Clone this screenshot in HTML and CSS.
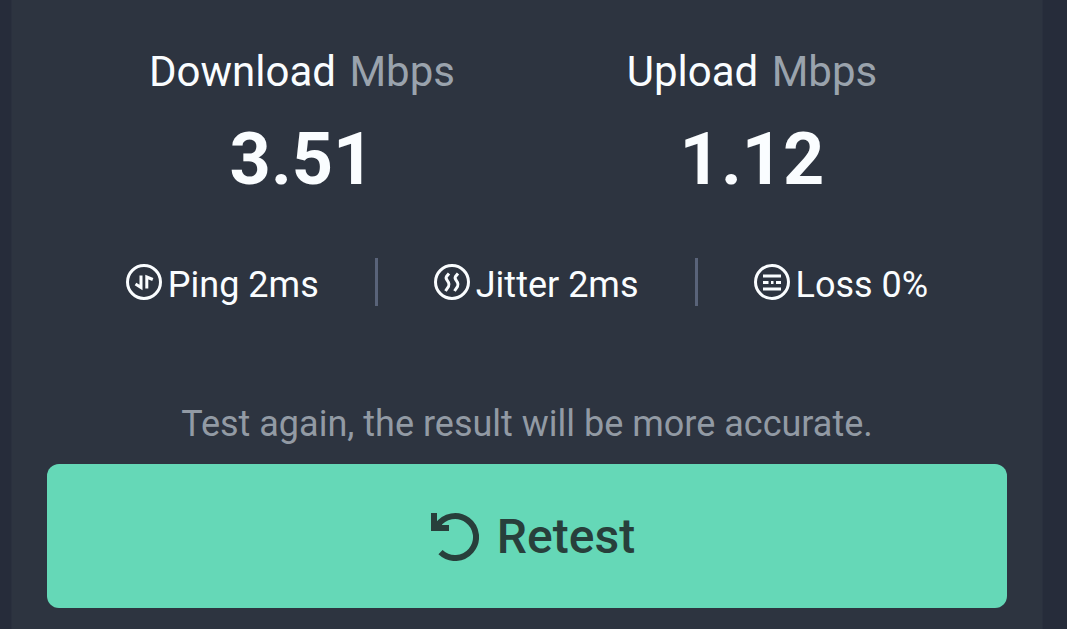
FILE: index.html
```
<!DOCTYPE html>
<html lang="en">
<head>
    <meta charset="UTF-8">
    <meta name="viewport" content="width=device-width, initial-scale=1.0">
    <title>Speed Test</title>
    <link rel="stylesheet" href="styles.css">
</head>
<body>
    <main class="panel">
        <!-- Speeds -->
        <section class="speeds">
            <div class="speed">
                <h2 class="speed-title">Download <span class="unit">Mbps</span></h2>
                <p class="speed-value">3.51</p>
            </div>
            <div class="speed">
                <h2 class="speed-title">Upload <span class="unit">Mbps</span></h2>
                <p class="speed-value">1.12</p>
            </div>
        </section>

        <!-- Connection details -->
        <ul class="stats">
            <li class="stat">
                <svg class="stat-icon" viewBox="0 0 36 36" aria-hidden="true">
                    <circle cx="18" cy="18" r="16.5" />
                    <path d="M15 11.500v12L9.500 20M20.800 24.500V13l6 2.500" />
                </svg>
                <span>Ping 2ms</span>
            </li>
            <li class="stat">
                <svg class="stat-icon" viewBox="0 0 36 36" aria-hidden="true">
                    <circle cx="18" cy="18" r="16.5" />
                    <path d="M15 9.500L12.500 12.500Q11.500 14 13 16L14.500 18.500Q15.500 20.500 14.500 22.500L11.500 27M24 9.500L21.500 12.500Q20.500 14 22 16L23.500 18.500Q24.500 20.500 23.500 22.500L20.500 27" />
                </svg>
                <span>Jitter 2ms</span>
            </li>
            <li class="stat">
                <svg class="stat-icon" viewBox="0 0 36 36" aria-hidden="true">
                    <circle cx="18" cy="18" r="16.5" />
                    <path d="M9 12h18M9 18.500h5.500M17 18.500h2.500M22 18.500h5M9 25h18" />
                </svg>
                <span>Loss 0%</span>
            </li>
        </ul>

        <p class="hint">Test again, the result will be more accurate.</p>
        <button type="button" class="retest">
            <svg class="retest-icon" viewBox="0 0 48 48" aria-hidden="true">
                <path class="arc" d="M6.500 12.500A21 21 0 1 1 9.500 39.200" />
                <path class="head" d="M0 0h6v8l5 0v4h7v6H0z" />
            </svg>
            Retest
        </button>
    </main>
</body>
</html>
```

FILE: styles.css
```
* {
    box-sizing: border-box;
}

body {
    margin: 0;
    min-height: 100vh;
    padding: 0 24px 0 11px;
    display: flex;
    background-color: #262c3a;
    color: #fafdff;
    font-family: Roboto, sans-serif;
}

.panel {
    flex: 1;
    padding: 48px 35px 20px;
    border: solid #2a303e;
    border-width: 0 1px;
    background-color: #2d3440;
}

/* Download and upload */
.speeds {
    display: grid;
    grid-template-columns: 1fr 1fr;
    padding: 0 30px;
    text-align: center;
}

.speed-title {
    margin: 0;
    font-size: 42px;
    font-weight: 400;
    line-height: 48px;
}

.unit {
    margin-left: 3px;
    color: #9aa3ad;
}

.speed-value {
    margin: 22px 0 0;
    font-size: 72px;
    font-weight: 700;
    line-height: 84px;
}

/* Ping, jitter and loss */
.stats {
    display: flex;
    justify-content: center;
    margin: 56px 0 0;
    padding: 0;
    list-style: none;
    font-size: 36px;
    line-height: 48px;
}

.stat {
    display: flex;
    align-items: center;
    gap: 6px;
    height: 48px;
}

.stat span {
    padding-top: 6px;
}

.stat + .stat {
    margin-left: 56px;
    padding-left: 56px;
    border-left: 3px solid #596379;
}

.stat-icon {
    width: 36px;
    height: 36px;
    fill: none;
    stroke: currentColor;
    stroke-width: 3;
}

.hint {
    margin: 94px 0 16px;
    color: #929aa4;
    font-size: 36px;
    line-height: 48px;
    text-align: center;
}

.retest {
    display: flex;
    justify-content: center;
    align-items: center;
    gap: 18px;
    width: 100%;
    height: 144px;
    padding: 1px 0 0 12px;
    border: 0;
    border-radius: 12px;
    background-color: #65d8b7;
    color: #283f3b;
    font-family: inherit;
    font-size: 48px;
    font-weight: 500;
    cursor: pointer;
}

.retest-icon {
    width: 48px;
    height: 48px;
}

.arc {
    fill: none;
    stroke: currentColor;
    stroke-width: 6;
}

.head {
    fill: currentColor;
}
```
